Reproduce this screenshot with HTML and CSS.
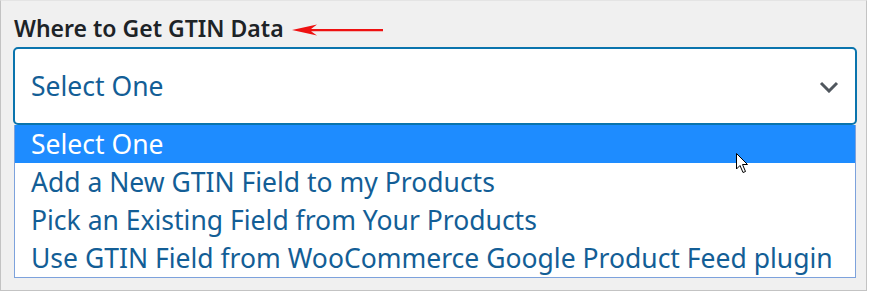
FILE: index.html
```html
<!DOCTYPE html>
<html lang="en">
<head>
  <meta charset="UTF-8">
  <title>GTIN Data</title>
  <link rel="stylesheet" href="styles.css">
</head>
<body>
  <div class="panel">
    <div class="label-row">
      <span class="field-label">Where to Get GTIN Data</span>
      <svg class="arrow" width="92" height="12" viewBox="0 0 92 12">
        <path d="M0 6 L25 0.5 L19 5 L91 5 L91 7.2 L19 7.2 L25 11.5 Z" fill="#ee1111"/>
      </svg>
    </div>
    <div class="select-box">
      <span class="select-value">Select One</span>
      <svg class="chevron" width="20" height="12" viewBox="0 0 20 12">
        <path d="M2 2 L10 10 L18 2" fill="none" stroke="#50575e" stroke-width="3"/>
      </svg>
    </div>
    <ul class="options">
      <li class="option selected">Select One
        <svg class="cursor" width="14" height="21" viewBox="0 0 14 21">
          <path d="M0.5 0.5 L0.5 16 L4 12.5 L7 19.5 L9.5 18.5 L6.5 11.5 L11.5 11.5 Z" fill="#fff" stroke="#000" stroke-width="1"/>
        </svg>
      </li>
      <li class="option">Add a New GTIN Field to my Products</li>
      <li class="option">Pick an Existing Field from Your Products</li>
      <li class="option">Use GTIN Field from WooCommerce Google Product Feed plugin</li>
    </ul>
  </div>
</body>
</html>
```

FILE: styles.css
```css
body {
  margin: 0;
  background: #fff;
  font-family: 'Noto Sans', 'Open Sans', Arial, sans-serif;
}
.panel {
  width: 867px;
  height: 291px;
  box-sizing: border-box;
  border: 1px solid #c3c3c3;
  border-top-color: #e4e4e4;
  background: #f0f0f0;
  padding: 12px 11px 0 12px;
}
.label-row {
  display: flex;
  align-items: center;
  gap: 8px;
  height: 30px;
  padding-left: 1px;
}
.field-label {
  font-size: 23px;
  font-weight: 600;
  color: #1d2327;
}
.arrow {
  margin-top: 3px;
}
.select-box {
  margin-top: 4px;
  width: 844px;
  height: 78px;
  box-sizing: border-box;
  border: 2px solid #0a74ad;
  border-radius: 5px;
  background: #fff;
  display: flex;
  align-items: center;
  justify-content: space-between;
  padding: 0 16px 0 16px;
}
.select-value {
  font-size: 26.5px;
  color: #135e96;
}
.chevron {
  margin-top: 2px;
}
.options {
  list-style: none;
  margin: 0 0 0 1px;
  padding: 0;
  width: 842px;
  box-sizing: border-box;
  border: 1px solid #7da2dc;
  border-top: none;
  background: #fff;
}
.option {
  position: relative;
  height: 38px;
  line-height: 38px;
  padding-left: 16px;
  font-size: 26.5px;
  color: #135e96;
  white-space: nowrap;
}
.option.selected {
  background: #1e8cff;
  color: #fff;
}
.cursor {
  position: absolute;
  left: 721px;
  top: 28px;
}
```
